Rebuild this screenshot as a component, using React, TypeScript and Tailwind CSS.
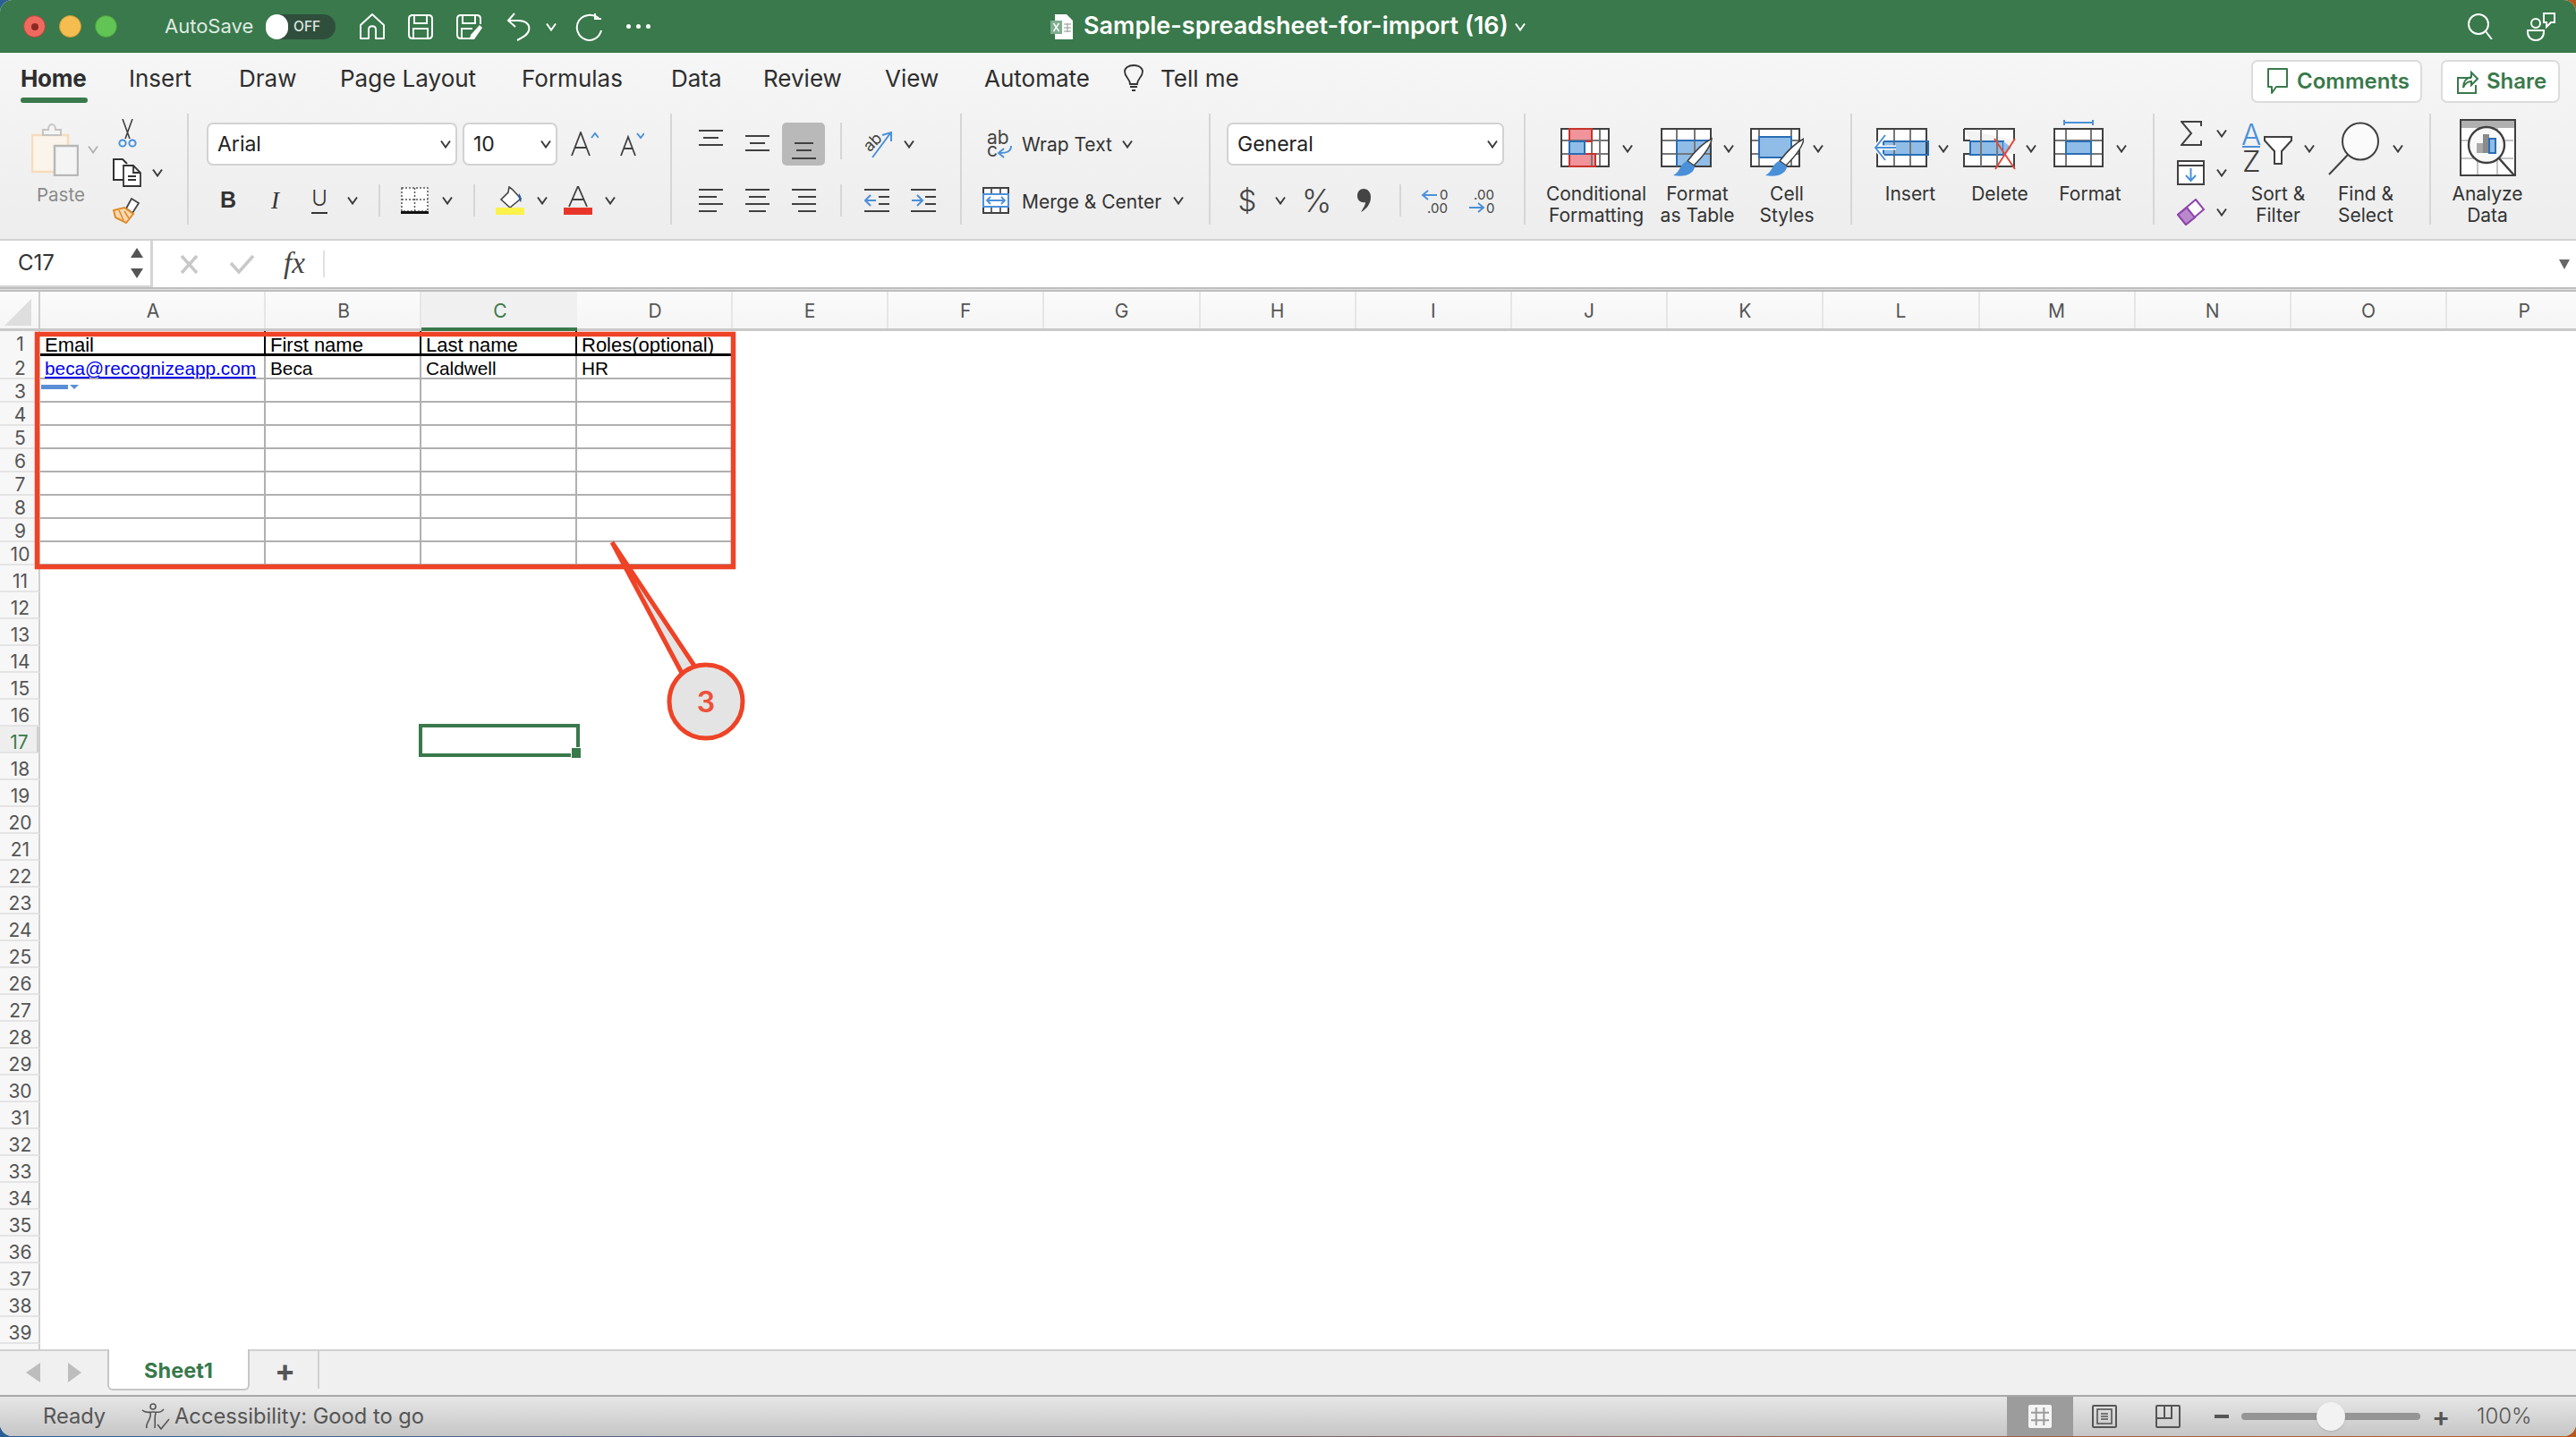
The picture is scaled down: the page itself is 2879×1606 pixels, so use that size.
import React from 'react';

const dark = '#404040';
const blue = '#4a90d9';
const cellBlue = '#8fbde8';
const edgeBlue = '#2a6db5';

const Chev: React.FC<{ className?: string; color?: string }> = ({ className = '', color = '#3c3c3c' }) => (
  <svg viewBox="0 0 12 10" className={`w-[12px] h-[10px] shrink-0 ${className}`}>
    <polyline points="1,1.5 6,8.5 11,1.5" fill="none" stroke={color} strokeWidth="2" />
  </svg>
);

const Sep: React.FC<{ className?: string }> = ({ className = '' }) => <div className={`w-[2px] h-[36px] bg-[#d6d6d6] shrink-0 ${className}`} />;

const Lines: React.FC<{ className?: string; widths: [number, number][]; h?: number; ys: number[]; w?: number }> = ({ className = '', widths, ys, h = 26, w = 27 }) => (
  <svg viewBox={`0 0 ${w} ${h}`} className={`shrink-0 ${className}`}>
    {ys.map((y, i) => (
      <line key={i} x1={widths[i][0]} x2={widths[i][1]} y1={y} y2={y} stroke={dark} strokeWidth="2" />
    ))}
  </svg>
);

const Grid: React.FC<{ w: number; cols: number[] }> = ({ w, cols }) => (
  <g>
    {cols.map((x) => <line key={x} x1={x} x2={x} y1="10" y2="54" stroke="#777" strokeWidth="2" />)}
    <line x1="0" x2={w} y1="24" y2="24" stroke="#777" strokeWidth="2" />
    <line x1="0" x2={w} y1="39" y2="39" stroke="#777" strokeWidth="2" />
    <rect x="1" y="11" width={w - 2} height="42" fill="none" stroke={dark} strokeWidth="2" />
  </g>
);

// handle runs from the top right of the table down to blue bristles below it
const Brush: React.FC<{ dx: number }> = ({ dx }) => (
  <g transform={`translate(${dx} 0)`}>
    <path d="M57 22 C56 32 45 44 37 52 L30 47 C36 39 47 27 57 22 Z" fill="#fff" stroke={dark} strokeWidth="1.6" />
    <path d="M29 47 L38 53 C38 60 28 66 14 63 C21 60 22 50 29 47 Z" fill={blue} />
  </g>
);

const Cond = () => (
  <svg viewBox="0 0 55 66" className="w-[55px] h-[66px] shrink-0">
    <rect x="1" y="11" width="53" height="42" fill="#fff" />
    <rect x="10" y="11" width="25" height="14" fill="#f0939a" />
    <rect x="10" y="39" width="29" height="14" fill="#f0939a" />
    <rect x="10" y="25" width="17" height="14" fill={cellBlue} />
    <Grid w={55} cols={[10, 35, 44]} />
    <rect x="10" y="11" width="25" height="14" fill="none" stroke="#c8332d" strokeWidth="2" />
    <rect x="10" y="39" width="29" height="14" fill="none" stroke="#c8332d" strokeWidth="2" />
    <rect x="10" y="25" width="17" height="14" fill="none" stroke={edgeBlue} strokeWidth="2" />
  </svg>
);

const FormatTable = () => (
  <svg viewBox="0 0 58 66" className="w-[58px] h-[66px] shrink-0">
    <rect x="1" y="11" width="55" height="42" fill="#fff" />
    <rect x="18" y="24" width="38" height="29" fill={cellBlue} />
    <Grid w={57} cols={[18, 38]} />
    <path d="M18 53 V24 H56" fill="none" stroke={edgeBlue} strokeWidth="2" />
    <Brush dx={0} />
  </svg>
);

const CellStyles = () => (
  <svg viewBox="0 0 60 66" className="w-[60px] h-[66px] shrink-0">
    <rect x="1" y="11" width="55" height="42" fill="#fff" />
    <Grid w={56} cols={[10, 46]} />
    <rect x="10" y="20" width="36" height="23" fill={cellBlue} stroke={edgeBlue} strokeWidth="2" />
    <Brush dx={3} />
  </svg>
);

const InsertIcon = () => (
  <svg viewBox="0 0 63 66" className="w-[63px] h-[66px] shrink-0">
    <rect x="5" y="11" width="55" height="42" fill="#fff" />
    <rect x="12" y="25" width="50" height="15" fill={cellBlue} stroke={edgeBlue} strokeWidth="2" />
    <line x1="24" x2="24" y1="10" y2="54" stroke="#777" strokeWidth="2" />
    <line x1="42" x2="42" y1="10" y2="54" stroke="#777" strokeWidth="2" />
    <rect x="5" y="11" width="55" height="42" fill="none" stroke={dark} strokeWidth="2" />
    <rect x="12" y="25" width="50" height="15" fill="none" stroke={edgeBlue} strokeWidth="2" />
    <path d="M14 18 L3 32 L14 46 M3 32 H26" fill="none" stroke="#fff" strokeWidth="5" />
    <path d="M14 18 L3 32 L14 46 M3 32 H26" fill="none" stroke={blue} strokeWidth="2" />
  </svg>
);

const DeleteIcon = () => (
  <svg viewBox="0 0 60 66" className="w-[60px] h-[66px] shrink-0">
    <path d="M1 11 H57 V24 M57 39 V53 H1 V39 H8 M8 24 H1 V11" fill="#fff" stroke={dark} strokeWidth="2" />
    <rect x="8" y="25" width="37" height="15" fill={cellBlue} stroke={edgeBlue} strokeWidth="2" />
    <line x1="20" x2="20" y1="11" y2="53" stroke="#777" strokeWidth="2" />
    <line x1="38" x2="38" y1="11" y2="53" stroke="#777" strokeWidth="2" />
    <path d="M45 25 L54 32 L45 40" fill={cellBlue} />
    <path d="M35 22 L58 56 M58 22 L36 56" stroke="#e0493b" strokeWidth="2" fill="none" />
  </svg>
);

const FormatIcon = () => (
  <svg viewBox="0 0 56 66" className="w-[56px] h-[66px] shrink-0">
    <path d="M12 1 V7 M44 1 V7 M12 4 H44" stroke={blue} strokeWidth="2" fill="none" />
    <rect x="1" y="11" width="54" height="42" fill="#fff" />
    <Grid w={56} cols={[14, 42]} />
    <rect x="14" y="25" width="28" height="14" fill={cellBlue} stroke={edgeBlue} strokeWidth="2" />
  </svg>
);

const SortIcon = () => (
  <svg viewBox="0 0 56 66" className="w-[56px] h-[66px] shrink-0 overflow-visible">
    <text x="-1" y="29" className="font-[family-name:Inter,sans-serif]" fontSize="33" fill={blue} fontWeight="300">A</text>
    <line x1="0" x2="20" y1="31" y2="31" stroke={blue} strokeWidth="2" />
    <text x="0" y="59" className="font-[family-name:Inter,sans-serif]" fontSize="33" fill={dark} fontWeight="300">Z</text>
    <path d="M25 20 H55 V24 L44 36 V50 H36 V36 L25 24 Z" fill="#fff" stroke={dark} strokeWidth="2" />
  </svg>
);

const FindIcon = () => (
  <svg viewBox="0 0 58 66" className="w-[58px] h-[66px] shrink-0">
    <ellipse cx="36" cy="25" rx="20" ry="20.5" fill="#fbfbfb" stroke={dark} strokeWidth="2" />
    <line x1="22" x2="1" y1="40" y2="62" stroke={dark} strokeWidth="2" />
  </svg>
);

const AnalyzeIcon = () => (
  <svg viewBox="0 0 63 66" className="w-[63px] h-[66px] shrink-0">
    <rect x="1" y="1" width="61" height="62" fill="#fff" stroke={dark} strokeWidth="2" />
    <rect x="2" y="2" width="59" height="8" fill="#b0b0b0" />
    <path d="M2 24 H60 M2 44 H60 M20 10 V62 M42 10 V62" stroke="#c4c4c4" strokeWidth="2" />
    <circle cx="30" cy="29" r="20" fill="#f8f8f8" stroke={dark} strokeWidth="2.4" />
    <rect x="19" y="27" width="7" height="11" fill="#a9a9a9" />
    <rect x="26" y="17" width="7" height="21" fill="#8a8a8a" />
    <rect x="33" y="22" width="7" height="16" fill={cellBlue} stroke={edgeBlue} strokeWidth="2" />
    <line x1="44" x2="61" y1="44" y2="63" stroke={dark} strokeWidth="2.4" />
  </svg>
);

const BigButton: React.FC<{ className: string; label: string[]; children: React.ReactNode }> = ({ className, label, children }) => (
  <div className={`flex flex-col items-center shrink-0 ${className}`}>
    <div className="h-[78px] shrink-0 flex items-center">{children}</div>
    <div className="shrink-0 text-center text-[21px] leading-[24px] text-[#333] whitespace-nowrap">
      {label.map((l) => <div key={l}>{l}</div>)}
    </div>
  </div>
);

const SelectBox: React.FC<{ className: string; text: string }> = ({ className, text }) => (
  <div className={`h-[48px] bg-white border-2 border-[#d2d2d2] rounded-[7px] flex items-center justify-between pl-[10px] pr-[5px] text-[23px] text-[#222] shrink-0 ${className}`}>
    <span>{text}</span>
    <Chev />
  </div>
);

const tabs = [
  { name: 'Insert', w: 'w-[123px]' },
  { name: 'Draw', w: 'w-[113px]' },
  { name: 'Page Layout', w: 'w-[203px]' },
  { name: 'Formulas', w: 'w-[167px]' },
  { name: 'Data', w: 'w-[103px]' },
  { name: 'Review', w: 'w-[136px]' },
  { name: 'View', w: 'w-[111px]' },
  { name: 'Automate', w: 'w-[156px]' },
];

const TitleBar = () => (
  <div className="h-[59px] bg-[#39794b] flex items-center shrink-0 text-white">
    <div className="ml-[26px] w-[25px] h-[25px] rounded-full bg-[#ee6a5f] border border-[#b8443a] flex items-center justify-center">
      <div className="w-[8px] h-[8px] rounded-full bg-[#8c2a22]" />
    </div>
    <div className="ml-[15px] w-[25px] h-[25px] rounded-full bg-[#f5bd4f] border border-[#c99a38]" />
    <div className="ml-[15px] w-[25px] h-[25px] rounded-full bg-[#61c454] border border-[#4a9a40]" />
    <span className="ml-[53px] w-[113px] text-[22px] text-[#dfeae2]">AutoSave</span>
    <div className="w-[78px] h-[28px] rounded-full bg-[#2f4f3c] flex items-center">
      <div className="w-[25px] h-[28px] rounded-full bg-white" />
      <span className="ml-[6px] text-[15.5px] font-medium text-[#dfe6e1]">OFF</span>
    </div>
    <svg viewBox="0 0 28 30" className="ml-[27px] w-[28px] h-[30px]">
      <path d="M14 1 L27 13 V28 H18 V18 C18 13 10 13 10 18 V28 H1 V13 Z" fill="none" stroke="#fff" strokeWidth="2" strokeLinejoin="round" />
    </svg>
    <svg viewBox="0 0 28 28" className="ml-[26px] w-[28px] h-[28px]">
      <path d="M5 1 H23 Q27 1 27 5 V23 Q27 27 23 27 H5 Q1 27 1 23 V5 Q1 1 5 1 Z M7 1 V10 H21 V1 M6 27 V16 H22 V27" fill="none" stroke="#fff" strokeWidth="2" />
    </svg>
    <svg viewBox="0 0 30 30" className="ml-[26px] w-[30px] h-[30px]">
      <path d="M20 28 H5 Q1 28 1 24 V6 Q1 2 5 2 H23 Q27 2 27 6 V12 M7 2 V11 H21 V2 M6 28 V17 H18" fill="none" stroke="#fff" strokeWidth="2" />
      <path d="M26 13 L29 16 L20 29 L15 29 L16 24 Z" fill="#fff" />
    </svg>
    <svg viewBox="0 0 27 32" className="ml-[26px] w-[27px] h-[32px]">
      <path d="M9 1 L2 9 L10 16 M2 9 H13 C21 9 27 13 25 20 C24 25 18 28 12 31" fill="none" stroke="#fff" strokeWidth="2" />
    </svg>
    <Chev className="ml-[17px]" color="#fff" />
    <svg viewBox="0 0 31 32" className="ml-[21px] w-[31px] h-[32px]">
      <path d="M26 6 C19 1 9 2 4 9 C-1 17 3 27 11 30 C19 33 27 28 29 20 M22 1 V7 H29" fill="none" stroke="#fff" strokeWidth="2" />
    </svg>
    <div className="ml-[26px] flex gap-[6px]">
      <div className="w-[5px] h-[5px] rounded-full bg-white" />
      <div className="w-[5px] h-[5px] rounded-full bg-white" />
      <div className="w-[5px] h-[5px] rounded-full bg-white" />
    </div>
    <svg viewBox="0 0 25 30" className="ml-[447px] w-[25px] h-[30px]">
      <path d="M5 1 H18 L25 8 V29 H5 Z" fill="#fff" />
      <rect x="0" y="8" width="13" height="15" fill="#7fae8f" />
      <path d="M3.5 11 L9.5 20 M9.5 11 L3.5 20" stroke="#fff" strokeWidth="1.4" />
      <path d="M15 12 H23 M15 16 H23 M15 20 H23 M19 11 V21" stroke="#8a9a8f" strokeWidth="1" />
    </svg>
    <span className="ml-[12px] w-[482px] text-[27px] font-semibold whitespace-nowrap">Sample-spreadsheet-for-import (16)</span>
    <Chev color="#fff" />
    <svg viewBox="0 0 28 29" className="ml-[1053px] w-[28px] h-[29px]">
      <ellipse cx="12" cy="12" rx="11" ry="11" fill="none" stroke="#fff" strokeWidth="2" />
      <line x1="20" y1="20" x2="27" y2="29" stroke="#fff" strokeWidth="2" />
    </svg>
    <svg viewBox="0 0 32 32" className="ml-[38px] w-[32px] h-[32px]">
      <circle cx="10" cy="12" r="5" fill="none" stroke="#fff" strokeWidth="2" />
      <path d="M1 20 H19 V22 C19 34 1 34 1 22 Z" fill="none" stroke="#fff" strokeWidth="2" />
      <path d="M19 1 H31 V11 H27 L22 16 V11 H19 Z" fill="none" stroke="#fff" strokeWidth="2" />
    </svg>
  </div>
);

const TabRow = () => (
  <div className="h-[68px] flex items-start pt-[13px] pl-[23px] text-[26px] leading-[32px] text-[#2e2e2e] relative">
    <div className="w-[121px] flex flex-col shrink-0">
      <span className="font-bold tracking-[-0.3px]">Home</span>
      <div className="mt-[5px] w-[75px] h-[6px] rounded-[3px] bg-[#39794b]" />
    </div>
    {tabs.map((t) => <span key={t.name} className={`${t.w} shrink-0 whitespace-nowrap`}>{t.name}</span>)}
    <svg viewBox="0 0 22 30" className="w-[22px] h-[30px] shrink-0">
      <path d="M7 22 C7 16 1 14 1 8 C1 4 5 1 11 1 C17 1 21 4 21 8 C21 14 15 16 15 22 Z M7 25 H15 M9 29 H13" fill="none" stroke="#333" strokeWidth="1.8" />
    </svg>
    <span className="ml-[19px] w-[86px] shrink-0 whitespace-nowrap">Tell me</span>
    <div className="ml-[1133px] -mt-[5px] w-[191px] h-[48px] bg-white border-2 border-[#dcdcdc] rounded-[7px] flex items-center pl-[15px] shrink-0">
      <svg viewBox="0 0 25 30" className="w-[25px] h-[30px]">
        <path d="M2 1 H23 V21 H11 L6 28 V21 H2 Z" fill="none" stroke="#39794b" strokeWidth="2" strokeLinejoin="round" />
      </svg>
      <span className="ml-[9px] text-[24px] font-semibold text-[#39794b]">Comments</span>
    </div>
    <div className="ml-[21px] -mt-[5px] w-[133px] h-[48px] bg-white border-2 border-[#dcdcdc] rounded-[7px] flex items-center pl-[15px] shrink-0">
      <svg viewBox="0 0 25 30" className="w-[25px] h-[30px]">
        <path d="M17 11 H2 V28 H22 V19" fill="none" stroke="#39794b" strokeWidth="2" />
        <path d="M8 22 C8 14 12 11 17 10 V5 L24 12 L17 19 V15 C13 15 10 17 8 22 Z" fill="none" stroke="#39794b" strokeWidth="2" />
      </svg>
      <span className="ml-[9px] text-[24px] font-semibold text-[#39794b]">Share</span>
    </div>
  </div>
);

const Clipboard = () => (
  <div className="w-[211px] border-r-2 border-[#d6d6d6] flex shrink-0">
    <div className="ml-[35px] w-[75px] pt-[10px] flex flex-col">
      <div className="flex items-center">
        <svg viewBox="0 0 53 60" className="w-[53px] h-[60px]">
          <rect x="1" y="14" width="40" height="41" fill="#fbf4ea" stroke="#f6dcbc" strokeWidth="2.5" />
          <path d="M13 8 H19 C19 0 27 0 27 8 H33 V14 H13 Z" fill="#f4f4f4" stroke="#c4c4c4" strokeWidth="2" />
          <rect x="26" y="26" width="26" height="33" fill="#f4f4f4" stroke="#b8b8b8" strokeWidth="2.5" />
        </svg>
        <Chev className="ml-[10px]" color="#b4b4b4" />
      </div>
      <span className="mt-[8px] ml-[6px] text-[20.5px] leading-[26px] text-[#8a8a8a]">Paste</span>
    </div>
    <div className="ml-[16px] pt-[6px] flex flex-col">
      <svg viewBox="0 0 21 32" className="ml-[6px] w-[21px] h-[32px]">
        <path d="M5 0 L13 22 M16 0 L8 22" stroke="#3f3f3f" strokeWidth="1.6" />
        <circle cx="5" cy="27" r="3.6" fill="none" stroke={blue} strokeWidth="2" />
        <circle cx="16" cy="27" r="3.6" fill="none" stroke={blue} strokeWidth="2" />
      </svg>
      <div className="mt-[12px] flex items-center">
        <svg viewBox="0 0 32 32" className="w-[32px] h-[32px]">
          <path d="M14 24 H1 V1 H11 L16 6" fill="#fff" stroke="#333" strokeWidth="2" />
          <path d="M12 8 H23 L31 16 V31 H12 Z M23 8 V16 H31 M17 20 H26 M17 24 H26" fill="#fff" stroke="#333" strokeWidth="1.8" />
        </svg>
        <Chev className="ml-[12px]" />
      </div>
      <svg viewBox="0 0 31 29" className="mt-[12px] w-[31px] h-[29px]">
        <path d="M21 1 L29 6 L22 17 L15 12 Z" fill="#fff" stroke="#444" strokeWidth="1.8" />
        <path d="M13 11 L23 18 L15 28 L3 22 L1 14 Z" fill="#fbd9b0" stroke="#e08a2c" strokeWidth="2" />
        <path d="M7 14 L12 25 M13 15 L18 23" stroke="#e08a2c" strokeWidth="1.6" />
      </svg>
    </div>
  </div>
);

const FontGroup = () => (
  <div className="w-[540px] border-r-2 border-[#d6d6d6] pt-[10px] shrink-0">
    <div className="h-[48px] flex items-center">
      <SelectBox className="ml-[20px] w-[280px]" text="Arial" />
      <SelectBox className="ml-[6px] w-[106px]" text="10" />
      <svg viewBox="0 0 31 28" className="ml-[15px] w-[31px] h-[28px]">
        <path d="M1 27 L11 1 L21 27 M5 18 H17" fill="none" stroke={dark} strokeWidth="1.8" />
        <path d="M23 7 L27 2 L31 7" fill="none" stroke={blue} strokeWidth="2" />
      </svg>
      <svg viewBox="0 0 27 28" className="ml-[24px] w-[27px] h-[28px]">
        <path d="M1 27 L9 6 L17 27 M4 19 H14" fill="none" stroke={dark} strokeWidth="1.8" />
        <path d="M19 2 L23 7 L27 2" fill="none" stroke={blue} strokeWidth="2" />
      </svg>
    </div>
    <div className="mt-[20px] h-[38px] flex items-center text-[#333]">
      <span className="ml-[35px] w-[16px] text-[25px] font-bold font-[family-name:'Liberation_Sans',sans-serif]">B</span>
      <span className="ml-[41px] w-[14px] text-[27px] italic font-[family-name:'Liberation_Serif',serif]">I</span>
      <span className="ml-[31px] w-[18px] h-[30px] flex justify-center border-b-2 border-[#333] text-[24px] leading-[26px] font-light">U</span>
      <Chev className="ml-[22px]" />
      <Sep className="ml-[23px]" />
      <svg viewBox="0 0 31 30" className="ml-[23px] w-[31px] h-[30px]">
        <rect x="1" y="1" width="29" height="26" fill="#fff" stroke="#555" strokeWidth="1.5" strokeDasharray="2 2" />
        <path d="M15.5 1 V27 M1 14 H30" stroke="#555" strokeWidth="1.5" strokeDasharray="2 2" />
        <line x1="0" x2="31" y1="28.5" y2="28.5" stroke="#111" strokeWidth="3" />
      </svg>
      <Chev className="ml-[15px]" />
      <Sep className="ml-[23px]" />
      <svg viewBox="0 0 32 32" className="ml-[23px] w-[32px] h-[32px]">
        <path d="M15 1 L19 4 L28 14 L16 24 L6 15 L14 7 Z" fill="#fff" stroke="#444" strokeWidth="1.6" />
        <path d="M26 8 C29 12 29 16 28 18 C26 16 25 12 26 8 Z" fill="#2b5ba8" />
        <rect x="0" y="24" width="32" height="8" fill="#fbf24a" />
      </svg>
      <Chev className="ml-[14px]" />
      <svg viewBox="0 0 32 32" className="ml-[18px] w-[32px] h-[32px]">
        <path d="M6 23 L16 0 L26 23 M10 15 H22" fill="none" stroke={dark} strokeWidth="1.8" />
        <rect x="0" y="24" width="32" height="8" fill="#e8352a" />
      </svg>
      <Chev className="ml-[14px]" />
    </div>
  </div>
);

const AlignGroup = () => (
  <div className="w-[324px] border-r-2 border-[#d6d6d6] pt-[10px] shrink-0">
    <div className="h-[48px] flex items-center">
      <Lines className="ml-[30px] w-[27px] h-[48px]" h={48} widths={[[0, 27], [5, 22], [0, 27]]} ys={[9, 17, 25]} />
      <Lines className="ml-[25px] w-[27px] h-[48px]" h={48} widths={[[0, 27], [5, 22], [0, 27]]} ys={[15, 23, 31]} />
      <div className="ml-[14px] w-[48px] h-[48px] rounded-[5px] bg-[#b9b9b9] flex justify-center">
        <Lines className="w-[27px] h-[48px]" h={48} widths={[[3, 24], [5, 22], [0, 27]]} ys={[23, 31, 40]} />
      </div>
      <Sep className="ml-[17px] h-[41px] -mt-[7px]" />
      <svg viewBox="0 0 32 30" className="ml-[24px] w-[32px] h-[30px] overflow-visible">
        <text x="0" y="20" fontSize="18" fill="#444" transform="rotate(-45 9 14)" className="font-[family-name:Inter,sans-serif]">ab</text>
        <path d="M10 30 L30 3 M21 5 L31 2 L31 12" fill="none" stroke={blue} strokeWidth="2" />
      </svg>
      <Chev className="ml-[13px]" />
    </div>
    <div className="mt-[20px] h-[38px] flex items-center">
      <Lines className="ml-[30px] w-[27px] h-[26px]" widths={[[0, 27], [0, 20], [0, 27], [0, 20]]} ys={[1, 9, 17, 25]} />
      <Lines className="ml-[25px] w-[27px] h-[26px]" widths={[[0, 27], [4, 23], [0, 27], [4, 23]]} ys={[1, 9, 17, 25]} />
      <Lines className="ml-[25px] w-[27px] h-[26px]" widths={[[0, 27], [7, 27], [0, 27], [7, 27]]} ys={[1, 9, 17, 25]} />
      <Sep className="ml-[27px]" />
      <svg viewBox="0 0 28 26" className="ml-[25px] w-[28px] h-[26px]">
        <path d="M0 1 H28 M0 25 H28 M16 9 H28 M16 17 H28" stroke={dark} strokeWidth="2" />
        <path d="M7 7 L1 13 L7 19 M1 13 H13" fill="none" stroke={blue} strokeWidth="2" />
      </svg>
      <svg viewBox="0 0 28 26" className="ml-[24px] w-[28px] h-[26px]">
        <path d="M0 1 H28 M0 25 H28 M16 9 H28 M16 17 H28" stroke={dark} strokeWidth="2" />
        <path d="M7 7 L13 13 L7 19 M1 13 H13" fill="none" stroke={blue} strokeWidth="2" />
      </svg>
    </div>
  </div>
);

const WrapGroup = () => (
  <div className="w-[278px] border-r-2 border-[#d6d6d6] pt-[10px] text-[21px] text-[#333] shrink-0">
    <div className="h-[48px] flex items-center">
      <svg viewBox="0 0 28 32" className="ml-[28px] w-[28px] h-[32px] overflow-visible">
        <text x="0" y="16" fontSize="21" fill="#444" className="font-[family-name:Inter,sans-serif]">ab</text>
        <text x="0" y="30" fontSize="21" fill="#444" className="font-[family-name:Inter,sans-serif]">c</text>
        <path d="M27 18 C27 24 23 26 14 26 M19 21 L13 26 L19 31" fill="none" stroke={blue} strokeWidth="2" />
      </svg>
      <span className="ml-[11px] w-[112px] pt-px whitespace-nowrap">Wrap Text</span>
      <Chev />
    </div>
    <div className="mt-[20px] h-[38px] flex items-center">
      <svg viewBox="0 0 30 30" className="ml-[23px] w-[30px] h-[30px]">
        <rect x="1" y="1" width="28" height="28" fill="#fff" stroke={dark} strokeWidth="2" />
        <path d="M1 8 H29 M1 22 H29 M10 1 V8 M20 1 V8 M10 22 V29 M20 22 V29" stroke={dark} strokeWidth="1.6" />
        <rect x="1" y="8" width="28" height="14" fill="#fff" stroke={blue} strokeWidth="2" />
        <path d="M9 11 L5 15 L9 19 M21 11 L25 15 L21 19 M5 15 H25" fill="none" stroke={blue} strokeWidth="1.8" />
      </svg>
      <span className="ml-[14px] w-[169px] pt-[3px] whitespace-nowrap">Merge &amp; Center</span>
      <Chev />
    </div>
  </div>
);

const DecIcon: React.FC<{ className: string; top: string; bottom: string; arrowTop: boolean }> = ({ className, top, bottom, arrowTop }) => (
  <svg viewBox="0 0 31 31" className={`w-[31px] h-[31px] overflow-visible ${className}`}>
    <text x={arrowTop ? 20 : 6} y="14" fontSize="15" fill="#444" className="font-[family-name:Inter,sans-serif]">{top}</text>
    <text x={arrowTop ? 6 : 20} y="29" fontSize="15" fill="#444" className="font-[family-name:Inter,sans-serif]">{bottom}</text>
    {arrowTop
      ? <path d="M7 4 L1 9 L7 14 M1 9 H17" fill="none" stroke={blue} strokeWidth="2" />
      : <path d="M11 18 L17 23 L11 28 M1 23 H17" fill="none" stroke={blue} strokeWidth="2" />}
  </svg>
);

const NumberGroup = () => (
  <div className="w-[352px] border-r-2 border-[#d6d6d6] pt-[10px] shrink-0">
    <div className="h-[48px] flex items-center">
      <SelectBox className="ml-[18px] w-[310px]" text="General" />
    </div>
    <div className="mt-[20px] h-[38px] flex items-center text-[#444]">
      <span className="ml-[33px] w-[16px] text-[33px] font-light leading-[38px] flex justify-center">$</span>
      <Chev className="ml-[23px]" />
      <span className="ml-[19px] w-[31px] text-[36px] font-light leading-[38px] flex justify-center">%</span>
      <svg viewBox="0 0 17 28" className="ml-[29px] w-[17px] h-[28px]">
        <path d="M8 1 C13 1 16 5 16 10 C16 18 11 24 5 27 C8 22 10 19 10 16 C5 17 1 14 1 9 C1 4 4 1 8 1 Z" fill="#444" />
      </svg>
      <Sep className="ml-[31px]" />
      <DecIcon className="ml-[23px]" top="0" bottom=".00" arrowTop />
      <DecIcon className="ml-[21px]" top=".00" bottom="0" arrowTop={false} />
    </div>
  </div>
);

const ClearIcon = () => (
  <svg viewBox="0 0 31 30" className="w-[31px] h-[30px]">
    <path d="M21 1 L30 12 L10 29 L1 18 Z" fill="#fff" stroke="#8e44ad" strokeWidth="2" />
    <path d="M11 10 L20 21 L10 29 L1 18 Z" fill="#b98acb" stroke="#8e44ad" strokeWidth="2" />
  </svg>
);

const App = () => {
  const columns = ['E', 'F', 'G', 'H', 'I', 'J', 'K', 'L', 'M', 'N', 'O', 'P'];
  const tallRows = Array.from({ length: 29 }, (_, i) => i + 11);

  return (
    <div className="w-[2879px] h-[1606px] bg-linear-to-r from-[#2a5f96] to-[#b5591f] overflow-hidden font-[family-name:Inter,sans-serif]">
      <div className="h-[1605px] rounded-[14px] overflow-hidden bg-white flex flex-col">
        <TitleBar />

        <div className="h-[210px] shrink-0 bg-linear-to-b from-[#f6f6f6] to-[#ededed] border-b-2 border-[#d2d2d2]">
          <TabRow />
          <div className="h-[124px] flex">
            <Clipboard />
            <FontGroup />
            <AlignGroup />
            <WrapGroup />
            <NumberGroup />
            <div className="w-[365px] border-r-2 border-[#d6d6d6] flex pl-[19px] shrink-0">
              <BigButton className="w-[120px]" label={['Conditional', 'Formatting']}>
                <Cond />
                <Chev className="ml-[14px]" />
              </BigButton>
              <BigButton className="w-[106px]" label={['Format', 'as Table']}>
                <FormatTable />
                <Chev className="ml-[12px]" />
              </BigButton>
              <BigButton className="w-[94px]" label={['Cell', 'Styles']}>
                <CellStyles />
                <Chev className="ml-[10px]" />
              </BigButton>
            </div>
            <div className="w-[338px] border-r-2 border-[#d6d6d6] flex pl-[15px] shrink-0">
              <BigButton className="w-[100px]" label={['Insert']}>
                <InsertIcon />
                <Chev className="ml-[10px]" />
              </BigButton>
              <BigButton className="w-[100px]" label={['Delete']}>
                <DeleteIcon />
                <Chev className="ml-[10px]" />
              </BigButton>
              <BigButton className="w-[102px]" label={['Format']}>
                <FormatIcon />
                <Chev className="ml-[14px]" />
              </BigButton>
            </div>
            <div className="w-[309px] border-r-2 border-[#d6d6d6] flex shrink-0">
              <div className="w-[89px] pt-[8px] pl-[25px] flex flex-col shrink-0">
                <div className="h-[28px] flex items-center">
                  <div className="w-[31px] flex justify-center">
                    <svg viewBox="0 0 24 28" className="w-[24px] h-[28px]">
                      <path d="M23 6 V1 H1 L12 14 L1 27 H23 V22" fill="none" stroke={dark} strokeWidth="2" />
                    </svg>
                  </div>
                  <Chev className="ml-[13px]" />
                </div>
                <div className="mt-[16px] h-[28px] flex items-center">
                  <svg viewBox="0 0 31 28" className="w-[31px] h-[28px]">
                    <rect x="1" y="1" width="29" height="26" fill="#fff" stroke={dark} strokeWidth="2" />
                    <line x1="1" x2="30" y1="6" y2="6" stroke={dark} strokeWidth="2" />
                    <path d="M15.5 9 V23 M10 17 L15.5 23 L21 17" fill="none" stroke={blue} strokeWidth="2" />
                  </svg>
                  <Chev className="ml-[13px]" />
                </div>
                <div className="mt-[15px] h-[30px] flex items-center">
                  <ClearIcon />
                  <Chev className="ml-[13px]" />
                </div>
              </div>
              <BigButton className="w-[98px]" label={['Sort &', 'Filter']}>
                <SortIcon />
                <Chev className="ml-[13px]" />
              </BigButton>
              <BigButton className="w-[98px]" label={['Find &', 'Select']}>
                <FindIcon />
                <Chev className="ml-[14px]" />
              </BigButton>
            </div>
            <BigButton className="w-[126px]" label={['Analyze', 'Data']}>
              <AnalyzeIcon />
            </BigButton>
          </div>
        </div>

        <div className="h-[52px] shrink-0 flex items-center bg-white">
          <div className="w-[171px] h-full border-r-[3px] border-b-2 border-[#d4d4d4] flex items-center shrink-0">
            <span className="ml-[20px] w-[126px] text-[24px] text-[#333]">C17</span>
            <div className="flex flex-col gap-[12px]">
              <div className="w-0 h-0 border-x-[7px] border-x-transparent border-b-[11px] border-b-[#555]" />
              <div className="w-0 h-0 border-x-[7px] border-x-transparent border-t-[11px] border-t-[#555]" />
            </div>
          </div>
          <svg viewBox="0 0 21 21" className="ml-[30px] w-[21px] h-[21px]">
            <path d="M2 1 L19 20 M19 1 L2 20" stroke="#c8c8c8" strokeWidth="3.5" />
          </svg>
          <svg viewBox="0 0 29 22" className="ml-[34px] w-[29px] h-[22px]">
            <path d="M2 10 L11 20 L27 2" fill="none" stroke="#c8c8c8" strokeWidth="3.5" />
          </svg>
          <span className="ml-[32px] w-[28px] text-[33px] italic text-[#444] font-[family-name:'Liberation_Serif',serif]">fx</span>
          <div className="ml-[16px] w-[2px] h-[30px] bg-[#e0e0e0]" />
          <div className="ml-auto mr-[7px] w-0 h-0 border-x-[6px] border-x-transparent border-t-[11px] border-t-[#666]" />
        </div>
        <div className="h-[5px] shrink-0 bg-[#e4e4e4] border-y-2 border-[#bdbdbd]" />

        <div className="relative flex-1 flex flex-col min-h-0">
          <div className="h-[44px] shrink-0 flex bg-linear-to-b from-[#fbfbfb] to-[#f5f5f5] border-b-[3px] border-[#c9c9c9] text-[21px] text-[#555]">
            <div className="w-[45px] h-full border-r-2 border-[#cfcfcf] flex items-end justify-center pb-[3px] shrink-0">
              <svg viewBox="0 0 30 30" className="w-[30px] h-[30px] ml-[-4px]">
                <polygon points="30,0 30,30 0,30" fill="#dedede" />
              </svg>
            </div>
            <div className="w-[252px] pt-[3px] pl-[2px] border-r-2 border-[#e6e6e6] flex items-center justify-center shrink-0">A</div>
            <div className="w-[174px] pt-[3px] pl-[2px] border-r-2 border-[#e6e6e6] flex items-center justify-center shrink-0">B</div>
            <div className="w-[174px] h-[44px] pt-[3px] pl-[2px] bg-[#f0f0f0] border-b-4 border-[#39794b] flex items-center justify-center text-[#39794b] shrink-0">C</div>
            <div className="w-[174px] pt-[3px] pl-[2px] border-r-2 border-[#e6e6e6] flex items-center justify-center shrink-0">D</div>
            {columns.map((c) => (
              <div key={c} className="w-[174.2px] pt-[3px] border-r-2 border-[#e6e6e6] flex items-center justify-center shrink-0">{c}</div>
            ))}
          </div>

          <div className="flex-1 flex flex-col min-h-0 overflow-hidden">
            <div className="h-[28px] flex shrink-0 text-[22px] leading-[32px] text-black font-[family-name:'Liberation_Sans',sans-serif]">
              <div className="w-[45px] pt-[2px] pl-[2px] border-r-2 border-[#cfcfcf] bg-[#f7f7f7] flex items-center justify-center text-[21px] text-[#555] font-[family-name:Inter,sans-serif]">1</div>
              <div className="w-[252px] border-r-2 border-b-[3px] border-black pl-[5px]">Email</div>
              <div className="w-[174px] border-r-2 border-b-[3px] border-black pl-[5px]">First name</div>
              <div className="w-[174px] border-r-2 border-b-[3px] border-black pl-[5px]">Last name</div>
              <div className="w-[174px] border-b-[3px] border-black pl-[5px] whitespace-nowrap">Roles(optional)</div>
            </div>
            {[2, 3, 4, 5, 6, 7, 8, 9, 10].map((n) => (
              <div key={n} className="h-[26px] flex shrink-0 text-[20.8px] leading-[27px] text-black font-[family-name:'Liberation_Sans',sans-serif]">
                <div className="w-[45px] pt-[2px] pl-[2px] border-r-2 border-b-2 border-r-[#cfcfcf] border-b-[#e4e4e4] bg-[#f7f7f7] flex items-center justify-center text-[21px] text-[#555] font-[family-name:Inter,sans-serif]">{n}</div>
                <div className="w-[252px] border-r-2 border-b-2 border-[#b0b0b0] pl-[5px] text-[#0000ee] underline whitespace-nowrap">{n === 2 ? 'beca@recognizeapp.com' : ''}</div>
                <div className="w-[174px] border-r-2 border-b-2 border-[#b0b0b0] pl-[5px]">{n === 2 ? 'Beca' : ''}</div>
                <div className="w-[174px] border-r-2 border-b-2 border-[#b0b0b0] pl-[5px]">{n === 2 ? 'Caldwell' : ''}</div>
                <div className="w-[174px] border-b-2 border-[#b0b0b0] pl-[5px]">{n === 2 ? 'HR' : ''}</div>
              </div>
            ))}
            {tallRows.map((n) => (
              <div key={n} className={`h-[30.03px] w-[45px] shrink-0 border-r-2 border-b-2 border-r-[#cfcfcf] border-b-[#e4e4e4] flex items-center justify-center pt-[7px] pl-[2px] text-[21px] ${n === 17 ? 'bg-[#eeeeee] text-[#39794b] border-r-4 border-r-[#39794b]' : 'bg-[#f7f7f7] text-[#555]'}`}>{n}</div>
            ))}
            <div className="h-[8px] w-[45px] shrink-0 border-r-2 border-[#cfcfcf] bg-[#f7f7f7]" />
          </div>

          {/* smart tag under the hyperlink */}
          <div className="absolute left-[46px] top-[104px] flex items-start">
            <div className="w-[30px] h-[5px] bg-[#5a8fd8]" />
            <div className="ml-[2px] w-0 h-0 border-x-[5px] border-x-transparent border-t-[5px] border-t-[#5a8fd8]" />
          </div>

          {/* selected cell */}
          <div className="absolute left-[468px] top-[483px] w-[180px] h-[37px] border-[4px] border-[#39794b]" />
          <div className="absolute left-[638px] top-[509px] w-[12px] h-[13px] bg-[#39794b] border border-white" />

          {/* annotation */}
          <svg viewBox="0 0 860 520" className="absolute left-0 top-0 w-[860px] h-[520px] pointer-events-none">
            <rect x="41.5" y="47.5" width="778" height="260" fill="none" stroke="#ee4327" strokeWidth="5.5" />
            <path d="M684 281 L763 427 C762 430 776 418 776 418 Z" fill="#e4e4e4" />
            <path d="M684 280 L700 310 L763 428 M684 280 L776 418" fill="none" stroke="#ee4327" strokeWidth="5" />
            <circle cx="789" cy="458" r="41" fill="#e4e4e4" stroke="#ee4327" strokeWidth="5" />
            <text x="789" y="470" textAnchor="middle" fontSize="32" fontWeight="600" fill="#ee5038" className="font-[family-name:Inter,sans-serif]">3</text>
          </svg>
        </div>

        <div className="h-[51px] shrink-0 bg-[#f0f0f0] border-t-2 border-[#d0d0d0] flex items-start relative">
          <div className="ml-[29px] mt-[13px] w-0 h-0 border-y-[11px] border-y-transparent border-r-[16px] border-r-[#bdbdbd]" />
          <div className="ml-[31px] mt-[13px] w-0 h-0 border-y-[11px] border-y-transparent border-l-[15px] border-l-[#bdbdbd]" />
          <div className="ml-[29px] -mt-[2px] w-[159px] h-[46px] bg-white border-2 border-t-0 border-[#c6c6c6] rounded-b-[6px] flex items-center justify-center pt-[4px] text-[23.5px] font-bold text-[#39794b]">Sheet1</div>
          <span className="ml-[28px] mt-[2px] text-[34px] leading-[40px] font-bold text-[#555]">+</span>
          <div className="ml-[25px] w-[2px] h-[42px] bg-[#d0d0d0]" />
        </div>

        <div className="h-[46px] shrink-0 bg-linear-to-b from-[#e6e6e6] to-[#c6c6c6] border-t-2 border-[#a8a8a8] flex items-center text-[23.7px] text-[#555]">
          <span className="ml-[48px] w-[110px]">Ready</span>
          <svg viewBox="0 0 32 30" className="w-[32px] h-[30px]">
            <circle cx="13" cy="4" r="3" fill="none" stroke="#555" strokeWidth="1.6" />
            <path d="M1 8 C5 12 9 10 13 10 C17 10 21 12 25 7 M10 11 C12 18 4 22 6 28 M16 11 C14 18 16 20 15 28" fill="none" stroke="#555" strokeWidth="1.6" />
            <path d="M18 24 L22 29 L31 18" fill="none" stroke="#555" strokeWidth="1.6" />
          </svg>
          <span className="ml-[5px] whitespace-nowrap">Accessibility: Good to go</span>
          <div className="ml-auto w-[74px] h-full bg-[#9c9c9c] flex items-center justify-center">
            <svg viewBox="0 0 26 26" className="w-[26px] h-[26px]">
              <rect width="26" height="26" rx="2" fill="#f4f4f4" />
              <path d="M8.7 3 V23 M17.3 3 V23 M3 8.7 H23 M3 17.3 H23" stroke="#9c9c9c" strokeWidth="2" />
            </svg>
          </div>
          <svg viewBox="0 0 28 26" className="ml-[21px] w-[28px] h-[26px]">
            <rect x="1" y="1" width="26" height="24" rx="1" fill="none" stroke="#555" strokeWidth="2" />
            <rect x="6" y="5" width="16" height="16" fill="none" stroke="#555" strokeWidth="1.6" />
            <path d="M10 10 H18 M10 13 H18 M10 16 H18" stroke="#555" strokeWidth="1.6" />
          </svg>
          <svg viewBox="0 0 28 26" className="ml-[43px] w-[28px] h-[26px]">
            <rect x="1" y="1" width="26" height="24" rx="1" fill="none" stroke="#555" strokeWidth="2" />
            <path d="M1 15 H18 V1 M10 1 V15" fill="none" stroke="#555" strokeWidth="2" />
          </svg>
          <div className="ml-[38px] w-[16px] h-[4px] bg-[#555]" />
          <div className="ml-[14px] w-[200px] h-[8px] rounded-full bg-[#959595] relative">
            <div className="absolute left-[84px] -top-[12px] w-[32px] h-[32px] rounded-full bg-[#f2f2f2] shadow-sm" />
          </div>
          <span className="ml-[13px] w-[17px] text-[30px] leading-[30px] font-semibold">+</span>
          <span className="ml-[33px] w-[62px] mr-[49px] text-[24px] font-light whitespace-nowrap">100%</span>
        </div>
      </div>
    </div>
  );
};

export default App;
